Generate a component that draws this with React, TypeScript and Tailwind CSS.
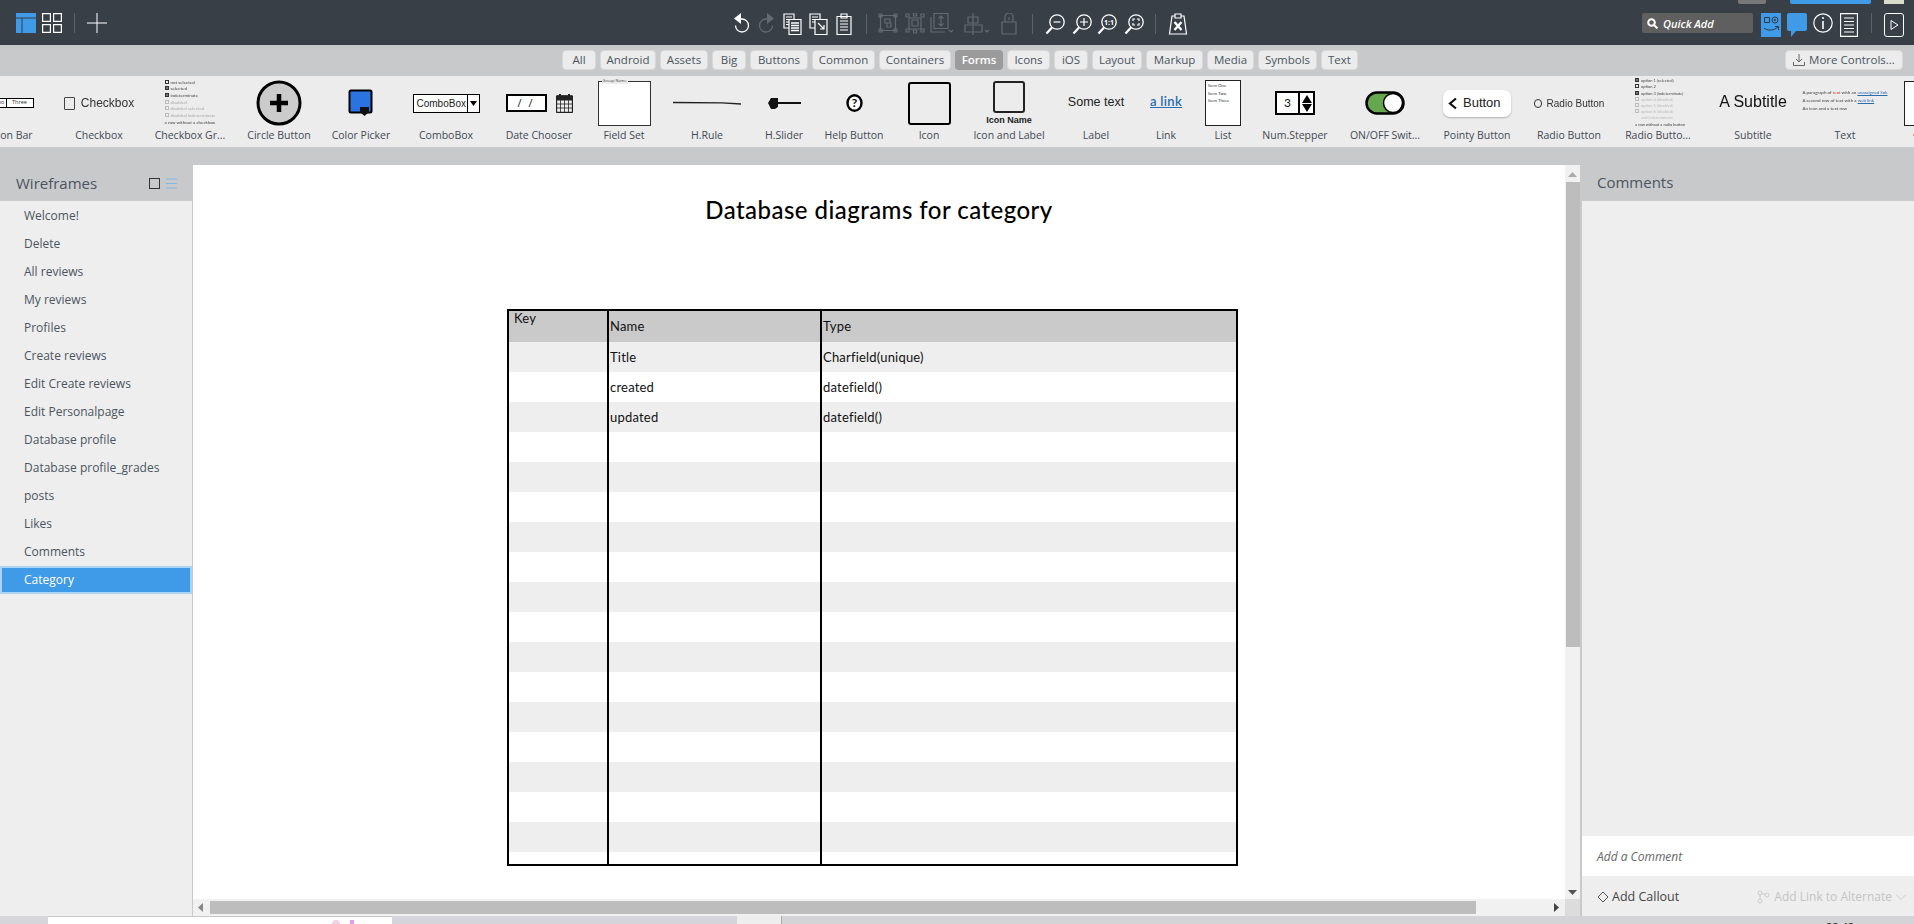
import React from "react";

const UI = "font-['Open_Sans',sans-serif]";
const SK = "font-['Lato','Inter',sans-serif]";
const AR = "font-['Liberation_Sans',sans-serif]";

const filters: [string, string][] = [
  ["All", "w-[34px]"], ["Android", "w-[56px]"], ["Assets", "w-[48px]"], ["Big", "w-[34px]"], ["Buttons", "w-[58px]"],
  ["Common", "w-[63px]"], ["Containers", "w-[72px]"], ["Forms", "w-[48px]"], ["Icons", "w-[43px]"], ["iOS", "w-[34px]"],
  ["Layout", "w-[50px]"], ["Markup", "w-[57px]"], ["Media", "w-[47px]"], ["Symbols", "w-[59px]"], ["Text", "w-[37px]"],
];

const pages = ["Welcome!", "Delete", "All reviews", "My reviews", "Profiles", "Create reviews", "Edit Create reviews", "Edit Personalpage", "Database profile", "Database profile_grades", "posts", "Likes", "Comments"];

const Sep = () => <span className="w-px h-[20px] bg-[#5c6168]" />;

function Ico({ w = 22, children, c = "#ffffff" }: { w?: number; children: React.ReactNode; c?: string }) {
  return (
    <svg width={w} height={22} viewBox={`0 0 ${w} 22`} fill="none" stroke={c} strokeWidth="1.2" className="shrink-0">
      {children}
    </svg>
  );
}

const Zoom = ({ children }: { children?: React.ReactNode }) => (
  <Ico w={20}>
    <circle cx="12" cy="9" r="7.2" strokeWidth="1.3" />
    <path d="M7 14.5 1.5 20.5" strokeWidth="2.2" />
    {children}
  </Ico>
);

function LibItem({ w, label, ml, children }: { w: string; label?: string; ml?: string; children?: React.ReactNode }) {
  return (
    <div className={`${w} ${ml ?? ""} shrink-0 flex flex-col items-center pt-[2px]`}>
      <div className="h-[50px] w-full flex items-center justify-center whitespace-nowrap">{children}</div>
      {label ? (
        <div className="h-[14px] leading-[14px] text-[10.5px] text-[#3f4a54] whitespace-nowrap">{label}</div>
      ) : (
        <div className="h-[14px] w-full flex items-center pl-[33px]"><span className="w-[3px] h-[2px] bg-[#e8a040]" /></div>
      )}
    </div>
  );
}

const tiny = "text-[4.5px] leading-[8px] text-[#444] whitespace-nowrap blur-[0.4px]";

function Box({ on, dim }: { on?: boolean; dim?: boolean }) {
  return <span className={`inline-block w-[4px] h-[4px] mr-[2px] border-[0.5px] ${dim ? "border-[#bbb]" : "border-[#333]"} ${on ? "bg-[#777]" : ""}`} />;
}

export default function App() {
  return (
    <div className={`w-[1914px] h-[924px] overflow-hidden flex flex-col bg-[#c8c9cb] ${UI}`}>
      {/* top bar */}
      <div className="h-[45px] shrink-0 bg-[#393f47] flex flex-col">
        <div className="h-[4px] flex">
          <span className="ml-[1738px] w-[28px] bg-[#777] rounded-b-[2px]" />
          <span className="ml-[24px] w-[81px] bg-[#3f9ae8] rounded-b-[2px]" />
          <span className="ml-[13px] w-[20px] bg-[#d8dcc8]" />
        </div>
        <div className="h-[41px] flex items-start pt-[9px] relative">
          <div className="flex items-center h-[20px] pl-[16px]">
            <svg width="20" height="20" viewBox="0 0 20 20" className="shrink-0"><path d="M0 0h20v4.5H0zM0 5.5h5.5V20H0zM6.5 5.5H20V20H6.5z" fill="#3f9ae8" /></svg>
            <svg width="20" height="20" viewBox="0 0 20 20" fill="none" stroke="#fff" strokeWidth="1.2" className="ml-[6px] shrink-0">
              <path d="M.6.6h7.8v7.8H.6zM11.6.6h7.8v7.8h-7.8zM.6 11.6h7.8v7.8H.6zM11.6 11.6h7.8v7.8h-7.8z" />
            </svg>
            <span className="ml-[12px] w-px h-[20px] bg-[#5c6168]" />
            <svg width="20" height="20" viewBox="0 0 20 20" fill="none" stroke="#fff" strokeWidth="1" className="ml-[12px] shrink-0"><path d="M10 0v20M0 10h20" /></svg>
          </div>
          {/* centre tools */}
          <div className="ml-[624px] flex items-center h-[22px]">
            <Ico w={20}><path d="M8 6h3a6.5 6.5 0 1 1-6.5 6.5" strokeWidth="1.3" /><path d="M10 0 3 5.500 10 11z" fill="#fff" stroke="none" /></Ico>
            <span className="w-[6px]" />
            <Ico w={20} c="#656a71"><path d="M12 6H9a6.5 6.5 0 1 0 6.5 6.5" strokeWidth="1.3" /><path d="M10 0l7 5.500L10 11z" fill="#656a71" stroke="none" /></Ico>
            <span className="w-[6px]" />
            <Ico w={20}><path d="M1 1h10v14H1z" /><path d="M3 4h6M3 6.5h6M3 9h6M3 11.5h6" /><path d="M6 6.5h12v15H6z" fill="#393f47" /><path d="M8 10h8M8 12.5h8M8 15h8M8 17.5h8" strokeWidth="1.4" /></Ico>
            <span className="w-[6px]" />
            <Ico w={20}><path d="M1 1h10v14H1z" /><path d="M3 4h6M3 6.5h6M3 9h6" /><path d="M6 6.5h12v15H6z" fill="#393f47" /><path d="M9 10l6 6M15 12v4h-4" /></Ico>
            <span className="w-[6px]" />
            <Ico w={18}><path d="M2 3.5h14v18H2z" /><path d="M6 1h6v4H6z" /><path d="M5 8h8M5 11h8M5 14h8M5 17h8" /></Ico>
            <span className="w-[13px]" />
            <Sep />
            <span className="w-[11px]" />
            <Ico w={20} c="#656a71"><path d="M2.5 2.5h15v15h-15z" /><path d="M1 1h3v3H1zM16 1h3v3h-3zM1 16h3v3H1zM16 16h3v3h-3z" /><path d="M7 6h5v4h-5zM9 10h4v4H9z" /></Ico>
            <span className="w-[7px]" />
            <Ico w={20} c="#656a71"><path d="M4 5h12v11H4z" /><path d="M1 1h3v3H1zM16 1h3v3h-3zM1 16h3v3H1zM16 16h3v3h-3zM8.5 0h3v3h-3zM8.5 17h3v3h-3z" /><path d="M7 7h6v6H7z" /></Ico>
            <span className="w-[5px]" />
            <Ico w={24} c="#656a71"><path d="M4 0.5h14v15H4z" /><path d="M1 4v15h14" /><path d="M11 3v10M8.5 5.5 11 3l2.5 2.5M8.5 10.5 11 13l2.5-2.5" /><path d="M19 17l2 2 2-2" /></Ico>
            <span className="w-[10px]" />
            <Ico w={26} c="#656a71"><path d="M4 4h10v6H4zM1 12h17v7H1z" /><path d="M9 0v22" /><path d="M21 17l2 2 2-2" /></Ico>
            <span className="w-[11px]" />
            <Ico w={16} c="#656a71"><path d="M1 9h14v12H1z" /><path d="M4 9V4a4 4 0 0 1 8 0v5" /><path d="M8 4v3" /></Ico>
            <span className="w-[15px]" />
            <Sep />
            <span className="w-[12px]" />
            <Zoom><path d="M8.5 9h7" /></Zoom>
            <span className="w-[7px]" />
            <Zoom><path d="M8 9h8M12 5v8" /></Zoom>
            <span className="w-[5px]" />
            <Zoom><text x="12" y="11.5" textAnchor="middle" fontSize="7" fontWeight="700" fill="#fff" stroke="none">1:1</text></Zoom>
            <span className="w-[7px]" />
            <Zoom><path d="M9 8V6h2M13 6h2v2M15 10v2h-2M11 12H9v-2" /></Zoom>
            <span className="w-[11px]" />
            <Sep />
            <span className="w-[12px]" />
            <Ico w={20}><path d="M7 3H4L1.5 21h17L16 3h-3" /><path d="M7 1h6v4H7z" /><path d="M6.5 9l7 8M13.5 9l-7 8" strokeWidth="2.4" /></Ico>
          </div>
          {/* right tools */}
          <div className="ml-auto mr-[10px] flex items-center h-[20px]">
            <div className="w-[111px] h-[20px] bg-[#5f5f5f] rounded-[2px] flex items-center pl-[5px] text-white">
              <svg width="11" height="11" viewBox="0 0 11 11" fill="none" stroke="#fff" strokeWidth="2" className="shrink-0"><circle cx="4.5" cy="4.5" r="3.3" /><path d="M7 7l3.4 3.4" /></svg>
              <span className="ml-[5px] text-[11px] italic font-semibold leading-none">Quick Add</span>
            </div>
            <svg width="20" height="24" viewBox="0 0 20 24" className="ml-[8px] shrink-0 self-start">
              <rect width="20" height="24" fill="#3f9ae8" />
              <path d="M3.5 4.5h5v5h-5z" fill="none" stroke="#2f3a46" />
              <circle cx="14" cy="7" r="3" fill="none" stroke="#2f3a46" />
              <circle cx="14" cy="7" r="1" fill="#2f3a46" />
              <path d="M3 15c4 3 9 3 14-1M14 13.500h3.500V17" fill="none" stroke="#2f3a46" />
            </svg>
            <svg width="20" height="24" viewBox="0 0 20 24" className="ml-[6px] shrink-0 self-start"><path d="M2 0h16a2 2 0 0 1 2 2v14a2 2 0 0 1-2 2H9l-5 6v-6H2a2 2 0 0 1-2-2V2a2 2 0 0 1 2-2z" fill="#3f9ae8" /></svg>
            <svg width="20" height="20" viewBox="0 0 20 20" fill="none" stroke="#fff" strokeWidth="1.2" className="ml-[6px] shrink-0"><circle cx="10" cy="10" r="9.2" /><path d="M10 8v8" strokeWidth="1.6" /><circle cx="10" cy="5" r="1" fill="#fff" stroke="none" /></svg>
            <svg width="18" height="24" viewBox="0 0 18 24" fill="none" stroke="#fff" strokeWidth="1.1" className="ml-[7px] shrink-0 self-start"><path d="M.6.600h16.800v22.800H.6z" /><path d="M4 5h10M4 8.500h10M4 12h10M4 15.500h10M4 19h10" /></svg>
            <span className="ml-[13px] w-px h-[20px] bg-[#5c6168]" />
            <svg width="20" height="24" viewBox="0 0 20 24" fill="none" stroke="#fff" strokeWidth="1" className="ml-[12px] shrink-0 self-start"><rect x=".5" y=".5" width="19" height="23" rx="2.500" /><path d="M7 7.500l7 4.500-7 4.500z" /></svg>
          </div>
        </div>
      </div>

      {/* filter row */}
      <div className="h-[31px] shrink-0 flex items-start pt-[5px] pl-[562px] pr-[11px]">
        <div className="flex gap-[4px]">
          {filters.map(([t, w]) =>
            t === "Forms" ? (
              <div key={t} className={`${w} h-[20px] rounded-[4px] bg-[#9b9b9b] text-white font-semibold text-[11.5px] leading-[20px] text-center`}>{t}</div>
            ) : (
              <div key={t} className={`${w} h-[20px] rounded-[4px] bg-[#ececec] border border-[#d8d8d8] text-[#4a5560] text-[11.5px] leading-[18px] text-center`}>{t}</div>
            )
          )}
        </div>
        <div className="ml-auto w-[118px] h-[20px] rounded-[4px] bg-[#ececec] border border-[#d8d8d8] text-[#4a5560] text-[11.5px] flex items-center justify-center gap-[4px]">
          <svg width="12" height="12" viewBox="0 0 12 12" fill="none" stroke="#666" strokeWidth="1"><path d="M6 0v8M3 5l3 3 3-3M.5 8v3.500h11V8" /></svg>
          More Controls...
        </div>
      </div>

      {/* library */}
      <div className="h-[71px] shrink-0 bg-[#ececec] flex overflow-hidden">
        <LibItem w="w-[92px]" ml="ml-[-40px]" label="Button Bar">
          <div className="ml-[-4px] flex h-[10px] border-[1.5px] border-black text-[5.500px] leading-[7px] text-[#333] bg-white">
            <span className="w-[17px] text-center border-r border-black">One</span>
            <span className="w-[14px] text-center border-r border-black">Two</span>
            <span className="w-[26px] text-center">Three</span>
          </div>
        </LibItem>
        <LibItem w="w-[94px]" label="Checkbox">
          <div className="flex items-center blur-[0.4px] text-[#333]">
            <span className="w-[11px] h-[13px] border-[1.5px] border-[#444] rounded-[1px]" />
            <span className={`ml-[6px] text-[12px] ${AR}`}>Checkbox</span>
          </div>
        </LibItem>
        <LibItem w="w-[88px]" label="Checkbox Gr...">
          <div className={`${tiny} ${SK} flex flex-col`}>
            <span className="leading-[6.700px]"><Box />not selected</span>
            <span className="leading-[6.700px]"><Box on />selected</span>
            <span className="leading-[6.700px]"><Box on />indeterminate</span>
            <span className="leading-[6.700px] text-[#aaa]"><Box dim />disabled</span>
            <span className="leading-[6.700px] text-[#aaa]"><Box dim />disabled selected</span>
            <span className="leading-[6.700px] text-[#aaa]"><Box dim />disabled indeterminate</span>
            <span className="leading-[6.700px]">a row without a checkbox</span>
          </div>
        </LibItem>
        <LibItem w="w-[90px]" label="Circle Button">
          <svg width="46" height="46" viewBox="0 0 46 46"><circle cx="23" cy="23" r="21" fill="#cbcbcb" stroke="#000" strokeWidth="3" /><path d="M23 14v18M14 23h18" stroke="#000" strokeWidth="4.500" /></svg>
        </LibItem>
        <LibItem w="w-[74px]" label="Color Picker">
          <svg width="26" height="28" viewBox="0 0 26 28"><rect x="1.500" y="1.500" width="22" height="22" rx="1.500" fill="#2a73e0" stroke="#000" strokeWidth="2" /><path d="M12 18h9v5l-4.500 4-4.500-4z" fill="#111" /></svg>
        </LibItem>
        <LibItem w="w-[96px]" label="ComboBox">
          <div className="flex w-[67px] h-[19px] border-[1.5px] border-black bg-white items-center">
            <span className={`flex-1 text-[10px] pl-[3px] text-[#222] ${AR}`}>ComboBox</span>
            <span className="w-[12px] h-full border-l-[1.5px] border-black flex items-center justify-center">
              <svg width="7" height="5" viewBox="0 0 7 5"><path d="M0 0h7L3.500 5z" /></svg>
            </span>
          </div>
        </LibItem>
        <LibItem w="w-[90px]" label="Date Chooser">
          <div className="flex items-center gap-[9px]">
            <div className="w-[41px] h-[18px] border-[2px] border-black bg-white text-[11px] leading-[13px] text-center tracking-[2px] text-[#222]">/ /</div>
            <svg width="17" height="20" viewBox="0 0 17 20" fill="none" stroke="#222"><rect x=".5" y="3" width="16" height="16.500" rx="1" fill="#eee" strokeWidth="1.300" /><path d="M.5 3h16v4H.5z" fill="#222" /><path d="M.5 11h16M.5 15h16M4.500 7v12M8.500 7v12M12.500 7v12" strokeWidth=".8" /><path d="M4 1v4M13 1v4" strokeWidth="2" /></svg>
          </div>
        </LibItem>
        <LibItem w="w-[80px]" label="Field Set">
          <div className="w-[53px] h-[45px] bg-white border border-[#333] relative">
            <span className="absolute left-[3px] top-[-4px] bg-[#ececec] text-[4px] leading-[6px] text-[#444] px-[1px]">Group Name</span>
          </div>
        </LibItem>
        <LibItem w="w-[86px]" label="H.Rule">
          <svg width="70" height="4" viewBox="0 0 70 4"><path d="M1 1.500 50 1.800 69 3" stroke="#222" strokeWidth="1.300" fill="none" /></svg>
        </LibItem>
        <LibItem w="w-[68px]" label="H.Slider">
          <svg width="34" height="14" viewBox="0 0 34 14"><path d="M8 7h26" stroke="#111" strokeWidth="2" /><path d="M1 7l3-5h7v9l-3 2H4z" fill="#111" /></svg>
        </LibItem>
        <LibItem w="w-[72px]" label="Help Button">
          <svg width="17" height="18" viewBox="0 0 17 18"><ellipse cx="8.500" cy="9" rx="7" ry="7.800" fill="#fff" stroke="#000" strokeWidth="2.400" /><text x="8.500" y="13" textAnchor="middle" fontSize="12" fontWeight="700" fontFamily="Lato">?</text></svg>
        </LibItem>
        <LibItem w="w-[78px]" label="Icon">
          <div className="w-[43px] h-[43px] border-[2px] border-black rounded-[3px]" />
        </LibItem>
        <LibItem w="w-[82px]" label="Icon and Label">
          <div className="flex flex-col items-center">
            <div className="w-[32px] h-[32px] border-[2px] border-[#222] rounded-[3px]" />
            <span className={`text-[9px] leading-[12px] mt-[1px] text-[#222] font-semibold ${AR}`}>Icon Name</span>
          </div>
        </LibItem>
        <LibItem w="w-[92px]" label="Label">
          <span className={`text-[12.500px] text-[#222] mt-[-2px] ${AR}`}>Some text</span>
        </LibItem>
        <LibItem w="w-[48px]" label="Link">
          <span className={`text-[13px] font-semibold tracking-[0.3px] text-[#2a6db0] underline mt-[-2px] ${SK}`}>a link</span>
        </LibItem>
        <LibItem w="w-[66px]" label="List">
          <div className={`w-[36px] h-[46px] bg-white border-[1.500px] border-[#222] flex flex-col pl-[2px] pt-[1px] text-[4.500px] leading-[7.500px] text-[#333] ${SK}`}>
            <span>Item One</span><span>Item Two</span><span>Item Three</span>
          </div>
        </LibItem>
        <LibItem w="w-[78px]" label="Num.Stepper">
          <div className="flex w-[40px] h-[24px] border-[2px] border-black bg-white items-center">
            <span className={`flex-1 text-center text-[12px] text-[#111] ${SK}`}>3</span>
            <span className="w-[15px] h-full border-l-[2px] border-black flex flex-col items-center justify-center gap-[1px]">
              <svg width="10" height="8" viewBox="0 0 10 8"><path d="M0 8 5 0l5 8z" /></svg>
              <svg width="10" height="8" viewBox="0 0 10 8"><path d="M0 0l5 8 5-8z" /></svg>
            </span>
          </div>
        </LibItem>
        <LibItem w="w-[102px]" label="ON/OFF Swit...">
          <svg width="40" height="24" viewBox="0 0 40 24"><rect x="1.500" y="1.500" width="37" height="21" rx="10.500" fill="#67a84f" stroke="#000" strokeWidth="2.500" /><circle cx="28" cy="12" r="9.500" fill="#fff" stroke="#000" strokeWidth="1.500" /></svg>
        </LibItem>
        <LibItem w="w-[82px]" label="Pointy Button">
          <div className={`w-[68px] h-[27px] bg-white rounded-[7px] shadow-[0_1px_2px_rgba(0,0,0,0.25)] flex items-center text-[13px] text-[#222] ${AR}`}>
            <svg width="11" height="13" viewBox="0 0 11 13" fill="none" stroke="#111" strokeWidth="2.200" className="ml-[4px]"><path d="M9 1.500 3 6.500l6 5" /></svg>
            <span className="ml-[5px]">Button</span>
          </div>
        </LibItem>
        <LibItem w="w-[102px]" label="Radio Button">
          <div className={`flex items-center text-[10px] text-[#333] blur-[0.3px] ${AR}`}>
            <span className="w-[8px] h-[9px] rounded-full border border-[#333]" />
            <span className="ml-[5px]">Radio Button</span>
          </div>
        </LibItem>
        <LibItem w="w-[76px]" label="Radio Butto...">
          <div className={`${tiny} ${SK} text-[4px] flex flex-col ml-[4px]`}>
            <span className="leading-[6.200px]"><Box on />option 1 (selected)</span>
            <span className="leading-[6.200px]"><Box />option 2</span>
            <span className="leading-[6.200px]"><Box on />option 3 (indeterminate)</span>
            <span className="leading-[6.200px] text-[#bbb]"><Box dim />option 4 (disabled)</span>
            <span className="leading-[6.200px] text-[#bbb]"><Box dim />option 5 (disabled)</span>
            <span className="leading-[6.200px] text-[#bbb]"><Box dim />option 6 (disabled)</span>
            <span className="leading-[6.200px] text-[#bbb] pl-[6px]">and indeterminate</span>
            <span className="leading-[6.200px]">a row without a radio button</span>
          </div>
        </LibItem>
        <LibItem w="w-[114px]" label="Subtitle">
          <span className={`${AR} text-[16px] text-[#111] blur-[0.3px] mt-[-2px]`}>A Subtitle</span>
        </LibItem>
        <LibItem w="w-[70px]" label="Text">
          <div className={`${tiny} text-[3.200px] leading-[4.500px] ${SK} mt-[-4px]`}>
            <div>A paragraph of <span className="text-[#d33]">text</span> with an <span className="text-[#2a6db0] underline">unassigned link</span></div>
            <div>A second row of text with a <span className="text-[#2a6db0] underline">web link</span></div>
            <div>An icon and a text row</div>
          </div>
        </LibItem>
        <LibItem w="w-[94px]">
          <div className="w-[46px] h-[45px] bg-white border-[1.500px] border-[#222]" />
        </LibItem>
      </div>

      {/* main area */}
      <div className="h-[769px] shrink-0 flex">
        {/* left */}
        <div className="w-[193px] shrink-0 flex flex-col">
          <div className="h-[54px] shrink-0 flex items-center pl-[16px] pr-[16px] pt-[18px] text-[#4a5560]">
            <span className="text-[15px] leading-none">Wireframes</span>
            <span className="ml-auto w-[11px] h-[11px] border border-[#333]" />
            <svg width="11" height="11" viewBox="0 0 11 11" stroke="#7fb8e8" className="ml-[6px]"><path d="M0 1h11M0 5.500h11M0 10h11" /></svg>
          </div>
          <div className="flex-1 bg-[#eeeeee] border-r border-[#c8c9cb] pt-[1px]">
            {pages.map((p) => (
              <div key={p} className="h-[28px] leading-[28px] pl-[24px] text-[12px] text-[#4a5560]">{p}</div>
            ))}
            <div className="h-[28px] w-[192px] bg-[#3f9ae8] border-y-[2px] border-x-[2px] border-[#aed4f4] pl-[22px] leading-[24px] text-[12px] text-white">Category</div>
          </div>
        </div>

        {/* centre */}
        <div className="w-[1387px] shrink-0 flex flex-col pt-[18px]">
          <div className="flex-1 flex min-h-0">
            <div className="w-[1372px] bg-white overflow-hidden">
              <div className={`mt-[31px] h-[28px] leading-[28px] text-center text-[24px] tracking-[0.45px] font-medium text-black ${SK}`}>Database diagrams for category</div>
              <div className={`ml-[314px] mt-[85px] w-[731px] h-[557px] border-[2.500px] border-black flex flex-col overflow-hidden text-[13px] tracking-[0.2px] text-[#111] ${SK}`}>
                <div className="h-[31px] shrink-0 bg-[#cacaca] flex">
                  <div className="w-[98px] shrink-0 pl-[5px] leading-[14px] pt-0">Key</div>
                  <div className="w-[213px] shrink-0 border-l-[2px] border-black pl-[1px] pt-[6px]">Name</div>
                  <div className="flex-1 border-l-[2px] border-black pl-[1px] pt-[6px]">Type</div>
                </div>
                {[
                  ["Title", "Charfield(unique)"], ["created", "datefield()"], ["updated", "datefield()"],
                  ["", ""], ["", ""], ["", ""], ["", ""], ["", ""], ["", ""], ["", ""], ["", ""], ["", ""], ["", ""], ["", ""], ["", ""], ["", ""], ["", ""], ["", ""],
                ].map(([a, b], i) => (
                  <div key={i} className={`h-[30px] shrink-0 flex ${i % 2 === 0 ? "bg-[#eeeeee]" : "bg-white"}`}>
                    <div className="w-[98px] shrink-0" />
                    <div className="w-[213px] shrink-0 border-l-[2px] border-black pl-[1px] leading-[30px]">{a}</div>
                    <div className="flex-1 border-l-[2px] border-black pl-[1px] leading-[30px]">{b}</div>
                  </div>
                ))}
              </div>
            </div>
            <div className="w-[15px] bg-[#f1f1f1] flex flex-col items-center">
              <svg width="9" height="6" viewBox="0 0 9 6" className="mt-[6px] shrink-0"><path d="M0 6l4.500-5L9 6z" fill="#aaa" /></svg>
              <div className="mt-[5px] w-[14px] h-[465px] bg-[#bdbdbd]" />
              <svg width="9" height="6" viewBox="0 0 9 6" className="mt-auto mb-[3px] shrink-0"><path d="M0 0h9L4.500 5z" fill="#555" /></svg>
            </div>
          </div>
          <div className="h-[17px] shrink-0 flex">
            <div className="w-[1372px] bg-[#f1f1f1] flex items-center">
              <svg width="5" height="9" viewBox="0 0 5 9" className="ml-[5px] shrink-0"><path d="M5 0v9L0 4.500z" fill="#888" /></svg>
              <div className="ml-[7px] w-[1266px] h-[13px] bg-[#bdbdbd]" />
              <svg width="5" height="9" viewBox="0 0 5 9" className="ml-[78px] shrink-0"><path d="M0 0v9l5-4.500z" fill="#444" /></svg>
            </div>
            <div className="w-[15px] bg-[#dcdcdc]" />
          </div>
        </div>

        {/* right */}
        <div className="w-[334px] shrink-0 flex flex-col border-l-2 border-[#c8c9cb]">
          <div className="h-[54px] shrink-0 pl-[15px] pt-[25px] text-[15px] leading-[20px] text-[#4a5560]">Comments</div>
          <div className="flex-1 bg-[#eeeeee]" />
          <div className="h-[40px] shrink-0 bg-white pl-[15px] pt-[1px] leading-[40px] text-[12px] italic text-[#666]">Add a Comment</div>
          <div className="h-[40px] shrink-0 bg-[#eeeeee] flex items-center pl-[15px] pr-[8px] pt-[2px] text-[12px]">
            <svg width="12" height="12" viewBox="0 0 12 12" fill="none" stroke="#555"><path d="M1 6l5-5 5 5-5 5z" /></svg>
            <span className="ml-[3px] text-[#444] text-[12.500px]">Add Callout</span>
            <span className="ml-auto flex items-center text-[#c4c4c4]">
              <svg width="13" height="14" viewBox="0 0 13 14" fill="none" stroke="#ccc" className="mr-[4px]"><circle cx="3" cy="3" r="2" /><circle cx="3" cy="11" r="2" /><circle cx="10" cy="5" r="2" /><path d="M3 5v4M5 4h3" /></svg>
              Add Link to Alternate
              <svg width="10" height="6" viewBox="0 0 10 6" fill="none" stroke="#ccc" className="ml-[4px]"><path d="M0 .5l5 5 5-5" /></svg>
            </span>
          </div>
        </div>
      </div>

      {/* bottom strip */}
      <div className="h-[8px] shrink-0 flex bg-[#d3d3d6] overflow-hidden">
        <div className="w-[48px] bg-[#d5d5da]" />
        <div className="w-[344px] bg-white border-t border-[#c8c8c8] flex">
          <span className="ml-[284px] mt-[3px] w-[8px] h-[5px] bg-[#efd4e4] rounded-t-full" />
          <span className="ml-[10px] mt-[3px] w-[4px] h-[5px] bg-[#e79ae8]" />
        </div>
        <div className="w-[345px] bg-[#d4d4da]" />
        <div className="w-[44px] bg-[#eeeeee]" />
        <div className="flex-1 bg-[#d4d4d6] border-l border-[#aaa] relative">
          <span className="absolute left-[1044px] top-[5px] text-[11px] leading-none text-[#222]">22:42</span>
        </div>
      </div>
    </div>
  );
}
